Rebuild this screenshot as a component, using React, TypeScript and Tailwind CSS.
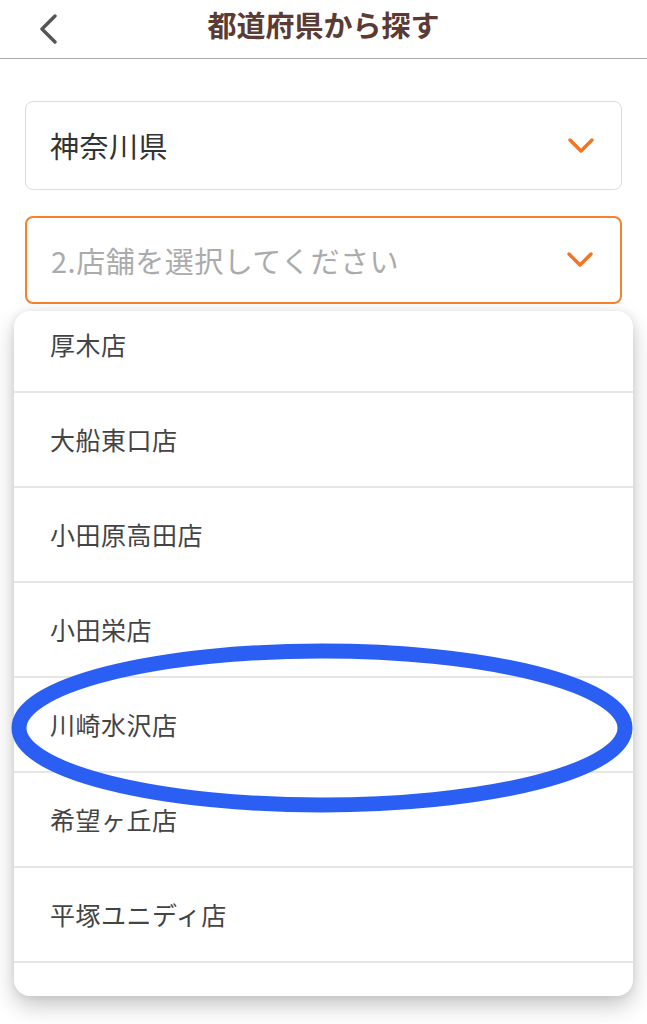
import React from "react";

const Chevron = () => (
  <svg width="26" height="16" viewBox="0 0 26 16" fill="none">
    <polyline points="2,2 13,13 24,2" stroke="#f5741f" strokeWidth="3.4" strokeLinecap="round" strokeLinejoin="round" />
  </svg>
);

const stores = ["厚木店", "大船東口店", "小田原高田店", "小田栄店", "川崎水沢店", "希望ヶ丘店", "平塚ユニディ店", ""];

export default function App() {
  return (
    <div
      className="relative w-[647px] h-[1024px] bg-white overflow-hidden"
      style={{ fontFamily: '"Noto Sans CJK JP", "Noto Sans", sans-serif' }}
    >
      <header className="h-[59px] border-b-[1.5px] border-[#a9a9a9] flex items-center">
        <div className="w-[100px] pl-[38px] flex items-center">
          <svg width="22" height="30" viewBox="0 0 22 30" fill="none">
            <polyline points="17,2 4,15 17,28" stroke="#555" strokeWidth="3.4" strokeLinecap="round" strokeLinejoin="round" />
          </svg>
        </div>
        <h1 className="flex-1 text-center text-[29px] font-bold text-[#5b3b33] leading-none pb-[10px]">都道府県から探す</h1>
        <div className="w-[100px]" />
      </header>

      <main className="px-[14px] pt-[42px]">
        <div className="mx-[11px] h-[89px] rounded-[8px] border-[1.5px] border-[#dcdcdc] flex items-center justify-between pl-[24px] pr-[27px]">
          <span className="text-[29px] tracking-[0.5px] text-[#333] leading-none">神奈川県</span>
          <Chevron />
        </div>
        <div className="mx-[11px] mt-[26px] h-[88px] rounded-[8px] border-2 border-[#f7812c] flex items-center justify-between pl-[24px] pr-[27px]">
          <span className="text-[29px] tracking-[0.5px] text-[#ababab] leading-none">2.店舗を選択してください</span>
          <Chevron />
        </div>

        <div className="mt-[7px] h-[685px] rounded-[16px] bg-white overflow-hidden shadow-[0_10px_22px_rgba(0,0,0,0.22),0_0_8px_rgba(0,0,0,0.08)]">
          <ul className="-mt-[13px]">
            {stores.map((s, i) => (
              <li key={i} className="h-[95px] border-b-2 border-[#e6e6e6] flex items-center pl-[36px] text-[25px] tracking-[0.5px] text-[#444] leading-none">
                {s}
              </li>
            ))}
          </ul>
        </div>
      </main>

      <svg className="absolute left-0 top-0 pointer-events-none" width="647" height="1024" viewBox="0 0 647 1024">
        <ellipse cx="322" cy="728" rx="303" ry="77" fill="none" stroke="#2b5ff3" strokeWidth="15" />
      </svg>
    </div>
  );
}
